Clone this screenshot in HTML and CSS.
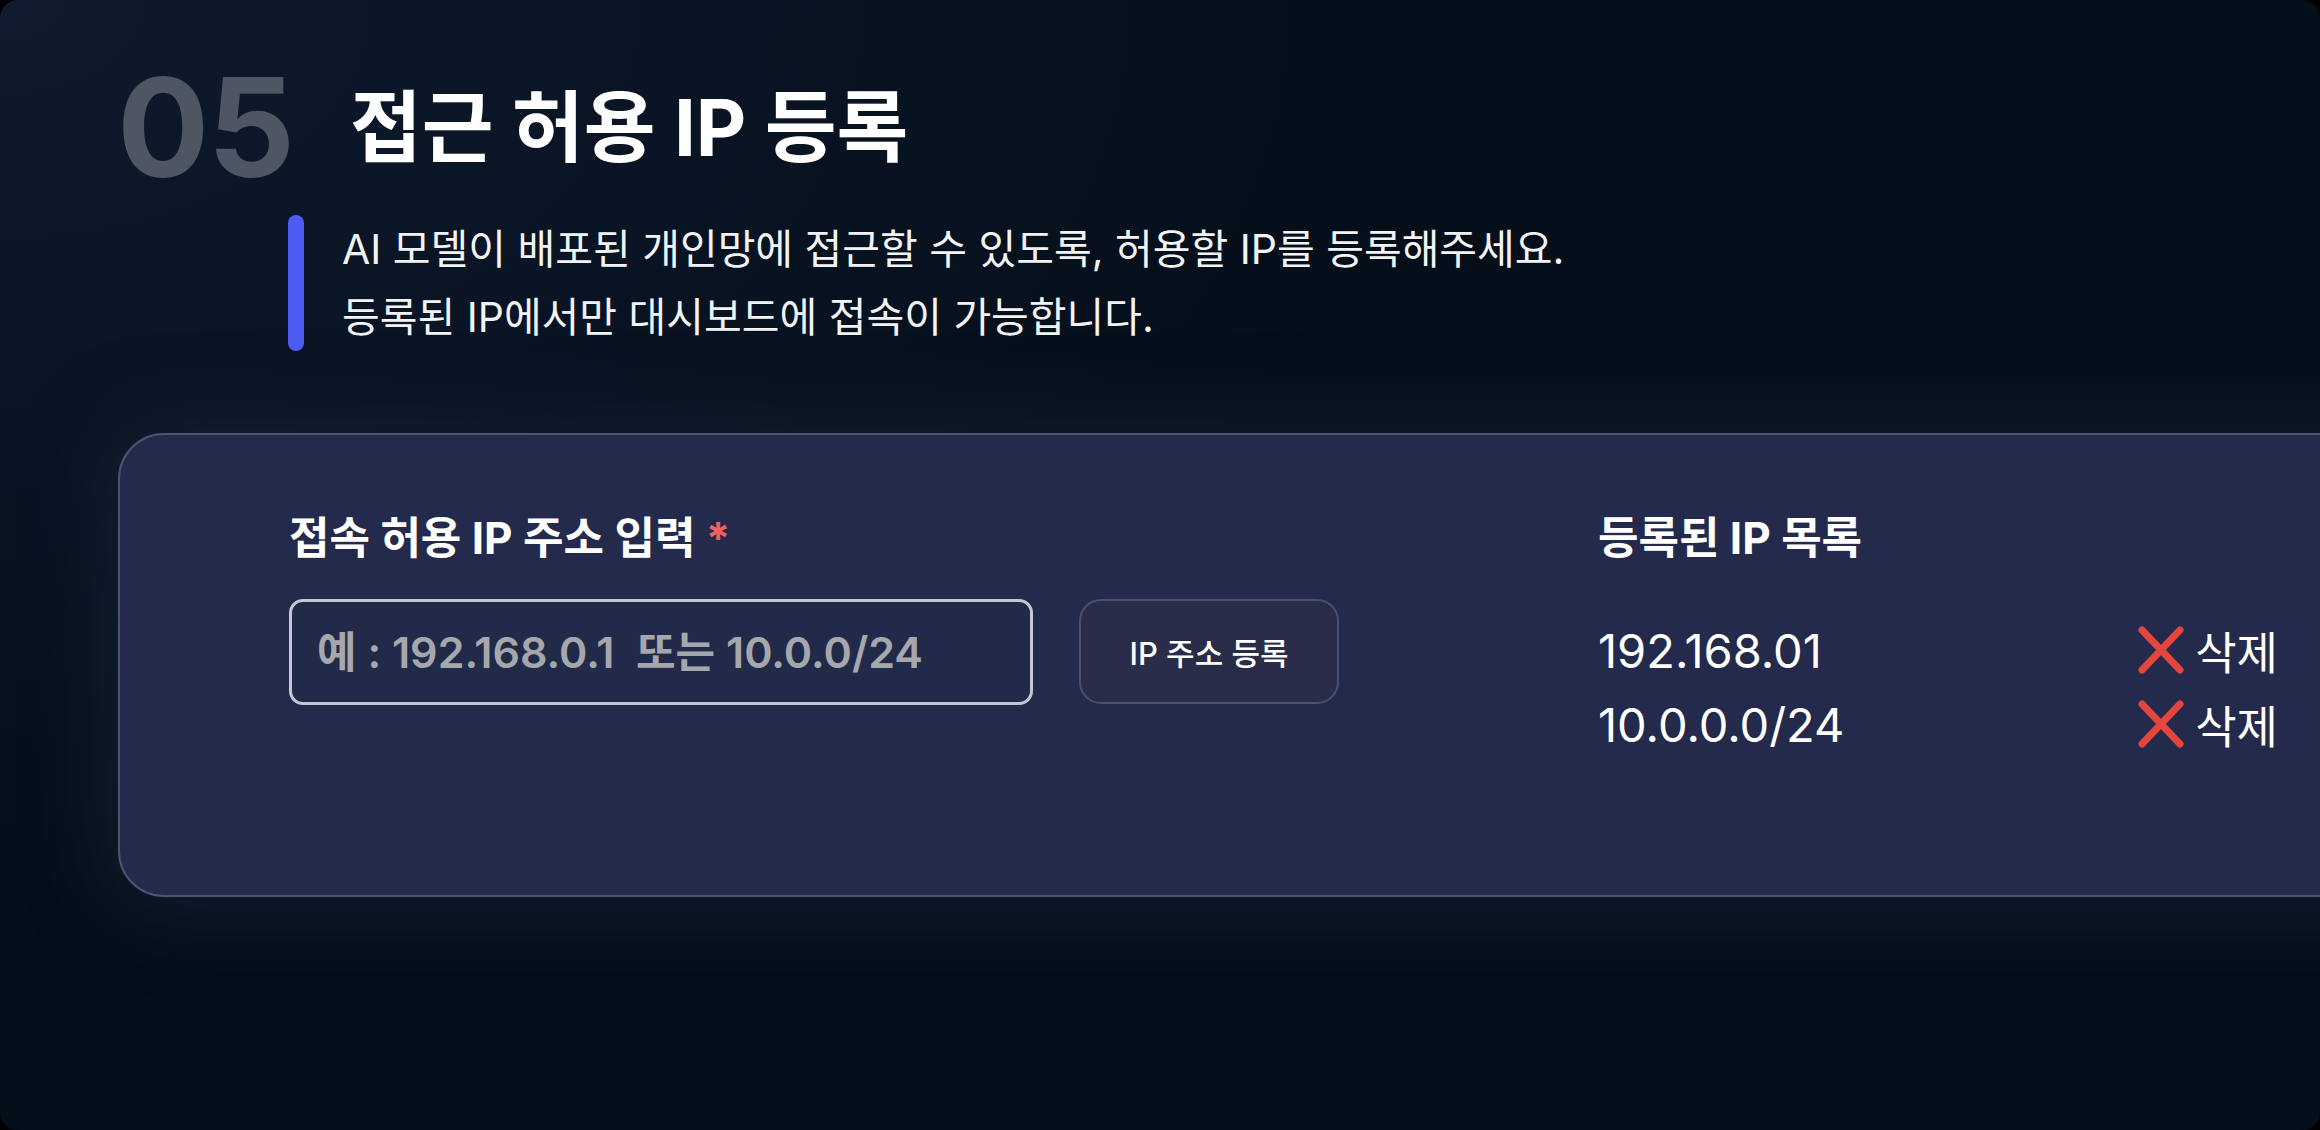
FILE: index.html
```html
<!DOCTYPE html>
<html lang="ko">
<head>
<meta charset="utf-8">
<title>접근 허용 IP 등록</title>
<link rel="stylesheet" href="styles.css">
</head>
<body>
<div class="frame">
  <header class="hero">
    <span class="step">05</span>
    <h1 class="title">접근 허용 IP 등록</h1>
  </header>
  <div class="desc">
    <div class="desc-bar"></div>
    <p class="desc-text">AI 모델이 배포된 개인망에 접근할 수 있도록, 허용할 IP를 등록해주세요.<br>등록된 IP에서만 대시보드에 접속이 가능합니다.</p>
  </div>
  <section class="card">
    <div class="col-input">
      <div class="label">접속 허용 IP 주소 입력 <span class="req">*</span></div>
      <div class="input-row">
        <input class="ip-input" type="text" placeholder="예 : 192.168.0.1  또는 10.0.0/24">
        <button class="btn" type="button">IP 주소 등록</button>
      </div>
    </div>
    <div class="col-list">
      <div class="label">등록된 IP 목록</div>
      <ul class="ip-list">
        <li class="ip-row">
          <span class="ip">192.168.01</span>
          <span class="del"><svg class="x" viewBox="0 0 50 50"><path d="M6 5 L44 45 M44 5 L6 45"/></svg>삭제</span>
        </li>
        <li class="ip-row">
          <span class="ip">10.0.0.0/24</span>
          <span class="del"><svg class="x" viewBox="0 0 50 50"><path d="M6 5 L44 45 M44 5 L6 45"/></svg>삭제</span>
        </li>
      </ul>
    </div>
  </section>
</div>
</body>
</html>
```
FILE: styles.css
```css
* { box-sizing: border-box; }
html, body { margin: 0; padding: 0; background: #000; }
body {
  font-family: Inter, "Noto Sans CJK KR", sans-serif;
  color: #fff;
  overflow: hidden;
}
.frame {
  width: 2320px;
  height: 1130px;
  border-radius: 18px;
  overflow: hidden;
  background:
    radial-gradient(ellipse 1400px 900px at 0% 0%, #0f1b2e 0%, #0a1526 40%, rgba(5,15,26,0) 100%),
    #050f1a;
  padding-top: 59px;
}
.hero {
  display: flex;
  align-items: center;
  padding-left: 117px;
  gap: 57px;
}
.step {
  font-family: Inter, sans-serif;
  font-weight: 700;
  font-size: 137px;
  line-height: 137px;
  color: #4d5662;
  letter-spacing: -2px;
}
.title {
  margin: 0;
  font-weight: 700;
  font-size: 78px;
  line-height: 96px;
  color: #fff;
}
.desc {
  display: flex;
  margin: 19px 0 0 288px;
  gap: 38px;
}
.desc-bar {
  width: 16px;
  border-radius: 8px;
  background: #4c5cf2;
}
.desc-text {
  margin: 0;
  font-size: 41px;
  line-height: 68px;
  color: #f2f3f5;
}
.card {
  margin: 82px 0 0 118px;
  width: 2400px;
  height: 464px;
  border: 2px solid #4c5472;
  border-radius: 46px;
  background: #232a4b;
  box-shadow: 0 0 70px 18px rgba(26, 42, 58, 0.5);
  display: flex;
  padding: 78px 0 0 169px;
  gap: 259px;
}
.label {
  font-weight: 700;
  font-size: 44px;
  line-height: 50px;
  color: #fff;
}
.req { color: #f0605d; }
.input-row {
  display: flex;
  gap: 46px;
  margin-top: 36px;
}
.ip-input {
  width: 744px;
  height: 106px;
  border: 3px solid #c4c8d2;
  border-radius: 14px;
  background: #222a4a;
  padding: 0 0 0 25px;
  font-family: Inter, "Noto Sans CJK KR", sans-serif;
  font-size: 43px;
  font-weight: 600;
  color: #fff;
  outline: none;
}
.ip-input::placeholder { color: #a6a7ad; }
.btn {
  width: 260px;
  height: 105px;
  border: 2px solid #4a5070;
  border-radius: 22px;
  background: #2a2d4a;
  color: #fff;
  font-family: Inter, "Noto Sans CJK KR", sans-serif;
  font-size: 31px;
  font-weight: 500;
}
.col-list { width: 680px; }
.ip-list {
  list-style: none;
  margin: 50px 0 0;
  padding: 0;
}
.ip-row {
  display: flex;
  justify-content: space-between;
  align-items: center;
  height: 74px;
  font-size: 47px;
}
.ip { color: #fff; }
.del {
  display: flex;
  align-items: center;
  gap: 9px;
  font-size: 45px;
}
.x { width: 50px; height: 50px; }
.x path {
  fill: none;
  stroke: #e5463c;
  stroke-width: 7;
  stroke-linecap: round;
}
```
